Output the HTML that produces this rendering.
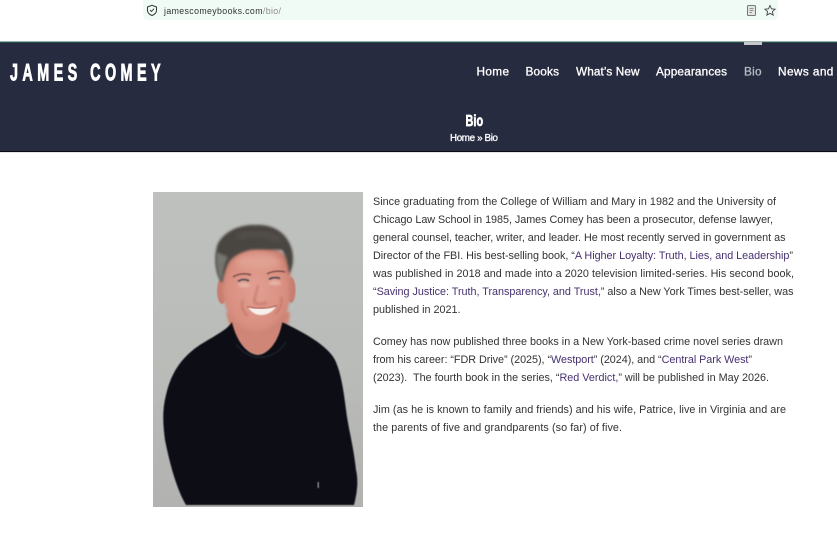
<!DOCTYPE html>
<html><head><meta charset="utf-8"><title>Bio</title>
<style>
html,body{margin:0;padding:0;background:#fff;width:837px;height:541px;overflow:hidden}
svg{position:absolute;left:0;top:0;display:block}
text{font-family:"Liberation Sans",sans-serif}
.b text{font-size:10.800px;fill:#333}
.l{fill:#46306f}
.n{font-size:11.800px;fill:#fff;stroke:#fff;stroke-width:.3px}
</style></head><body>
<svg width="837" height="541" viewBox="0 0 837 541" xmlns="http://www.w3.org/2000/svg">
<defs>
<filter id="t" x="-5%" y="-30%" width="110%" height="160%"><feGaussianBlur stdDeviation="0.25"/></filter>
<filter id="b1" x="-20%" y="-20%" width="140%" height="140%"><feGaussianBlur stdDeviation="1.200"/></filter>
<filter id="b2" x="-40%" y="-40%" width="180%" height="180%"><feGaussianBlur stdDeviation="3"/></filter>
<filter id="b0" x="-20%" y="-20%" width="140%" height="140%"><feGaussianBlur stdDeviation="0.6"/></filter>
<radialGradient id="face" cx="50%" cy="50%" r="60%"><stop offset="0" stop-color="#e2a093"/><stop offset=".7" stop-color="#d98f80"/><stop offset="1" stop-color="#bd7668"/></radialGradient>
<linearGradient id="bg" x1="0" y1="0" x2="0" y2="1"><stop offset="0" stop-color="#bec1be"/><stop offset=".6" stop-color="#b9bbb8"/><stop offset="1" stop-color="#b2b2b0"/></linearGradient>
<clipPath id="ph"><rect x="153" y="192" width="210" height="315"/></clipPath>
</defs>
<!-- URL bar -->
<path d="M143 0H778V15a5 5 0 0 1-5 5H148a5 5 0 0 1-5-5Z" fill="#f1fbf6"/>
<path d="M147.500 7l4.500-1.700L156.500 7v3.500c0 2.500-2 4-4.500 5-2.500-1-4.500-2.500-4.500-5Z" fill="none" stroke="#333" stroke-width="1"/>
<path d="M150 10l1.500 1.500 2.500-2.800" fill="none" stroke="#333" stroke-width=".9"/>
<text x="164" y="14" font-size="8.800" fill="#333" textLength="117" filter="url(#t)">jamescomeybooks.com<tspan fill="#8a8a8a">/bio/</tspan></text>
<rect x="747.500" y="5.500" width="8" height="10" rx="1" fill="#e2e6e4" stroke="#777" stroke-width="1"/>
<path d="M749.500 8.500h4M749.500 10.500h4M749.500 12.500h2.500" stroke="#777" stroke-width=".8"/>
<path d="M770 5.500l1.500 3.300 3.600.4-2.700 2.400.8 3.500-3.200-1.800-3.200 1.800.8-3.500-2.700-2.400 3.600-.4Z" fill="none" stroke="#444" stroke-width=".9"/>
<!-- header -->
<rect x="0" y="41.500" width="837" height="1" fill="#2f6a55"/>
<rect x="0" y="42.500" width="837" height="108.500" fill="#262b3f"/>
<rect x="0" y="151" width="837" height="1" fill="#0c0c10"/>
<rect x="0" y="152" width="837" height="1" fill="#e4e4e4"/>
<rect x="744" y="42" width="18" height="3" fill="#c6c6cc"/>
<text transform="translate(10 80.500) scale(.6 1)" font-size="24" font-weight="700" fill="#fff" stroke="#fff" stroke-width=".9" textLength="251">JAMES COMEY</text>
<g filter="url(#t)">
<text class="n" x="476.500" y="75.500" textLength="32.500">Home</text>
<text class="n" x="525.500" y="75.500" textLength="33.500">Books</text>
<text class="n" x="576" y="75.500" textLength="63.500">What’s New</text>
<text class="n" x="656" y="75.500" textLength="71">Appearances</text>
<text class="n" x="744" y="75.500" textLength="17.500" style="fill:#b9bac4;stroke:#b9bac4">Bio</text>
<text class="n" x="778" y="75.500" textLength="68">News and U</text>
</g>
<text transform="translate(465.500 126) scale(.68 1)" font-size="16" font-weight="700" fill="#fff" stroke="#fff" stroke-width=".7" textLength="26">Bio</text>
<text x="450" y="141" font-size="9.800" fill="#fff" stroke="#fff" stroke-width=".3" textLength="48" filter="url(#t)">Home » Bio</text>
<!-- photo -->
<g clip-path="url(#ph)">
<rect x="153" y="192" width="210" height="315" fill="url(#bg)"/>
<!-- neck -->
<path d="M226 312C230 330 236 350 258 356 280 350 288 335 290 312Z" fill="#cf8677" filter="url(#b1)"/>
<!-- sweater -->
<path d="M232 322C226 332 205 340 193 350 178 362 170 377 166 395 162 410 163 425 165 440 170 465 177 490 186 505H354C358 490 358 478 356 470 354 450 350 435 347 417 344 395 342 375 335 360 328 346 305 333 282 322 280 338 270 354 258 355 246 354 236 340 232 322Z" fill="#0e1016" filter="url(#b0)"/>
<path d="M236 344C248 362 274 362 286 342" fill="none" stroke="#1e2028" stroke-width="1.500" filter="url(#b0)"/>
<rect x="317.500" y="482" width="1.500" height="6" fill="#8a8a88" filter="url(#b0)"/>
<!-- ears -->
<ellipse cx="222" cy="291" rx="5" ry="13" fill="#c77e70" filter="url(#b0)"/>
<ellipse cx="291" cy="290" rx="4.500" ry="13" fill="#c77e70" filter="url(#b0)"/>
<!-- face -->
<path d="M222 265C220 295 226 320 243 331 254 336 267 335 276 329 290 318 292 292 290 262 280 240 235 240 222 265Z" fill="url(#face)" filter="url(#b1)"/>
<ellipse cx="258" cy="262" rx="22" ry="7" fill="#e0a192" filter="url(#b2)"/>
<!-- hair -->
<path d="M222 283C215 274 214 258 217 246 222 232 240 224 256 225 274 224 288 234 292 250 294 259 293 268 289 274 288 264 286 256 282 250 270 250 258 249 250 250 238 253 230 258 227 266 225 271 223 277 222 283Z" fill="#48443f" filter="url(#b1)"/>
<path d="M217 252C215 264 218 276 222 282 223 272 224 264 228 257Z" fill="#75746f" filter="url(#b1)"/>
<path d="M238 237C250 232 268 232 280 241" fill="none" stroke="#5d5852" stroke-width="3" filter="url(#b2)"/>
<!-- brows & eyes -->
<ellipse cx="244" cy="285" rx="6" ry="2.500" fill="#e8bbae" opacity=".8" filter="url(#b1)"/>
<ellipse cx="275" cy="283" rx="6" ry="2.500" fill="#e8bbae" opacity=".8" filter="url(#b1)"/>
<path d="M233 277C238 273.500 246 273 251 275M267 274C272 271 280 270.500 285 272" fill="none" stroke="#7a4f46" stroke-width="1.500" filter="url(#b0)"/>
<path d="M238 281.500C241 279 246 279 249 281M269 279.500C272 277 277 277 280 278.500" fill="none" stroke="#4e4e54" stroke-width="1.700" filter="url(#b0)"/>
<!-- nose -->
<path d="M258 285C256 295 253 301 255 303 259 305 265 304 267 302" fill="none" stroke="#b9685a" stroke-width="1.300" filter="url(#b1)"/>
<path d="M243 300C240 306 244 313 248 316M281 297C283 304 279 311 275 314" fill="none" stroke="#b56a5c" stroke-width="1.300" filter="url(#b1)"/>
<!-- mouth -->
<path d="M248 307C256 309 268 309 276 306 273 312 267 315 261 315 255 315 251 312 248 307Z" fill="#f7f0ea" filter="url(#b0)"/>
<path d="M247 306.500C255 309 268 309 277 305.500" fill="none" stroke="#98443c" stroke-width=".9" filter="url(#b0)"/>
</g>
<!-- body text -->
<g class="b" filter="url(#t)">
<text x="373" y="205" textLength="403">Since graduating from the College of William and Mary in 1982 and the University of</text>
<text x="373" y="223" textLength="400">Chicago Law School in 1985, James Comey has been a prosecutor, defense lawyer,</text>
<text x="373" y="241" textLength="412.500">general counsel, teacher, writer, and leader. He most recently served in government as</text>
<text x="373" y="259" textLength="420">Director of the FBI. His best-selling book, “<tspan class="l">A Higher Loyalty: Truth, Lies, and Leadership</tspan>”</text>
<text x="373" y="277" textLength="421">was published in 2018 and made into a 2020 television limited-series. His second book,</text>
<text x="373" y="295" textLength="420.500">“<tspan class="l">Saving Justice: Truth, Transparency, and Trust,</tspan>” also a New York Times best-seller, was</text>
<text x="373" y="313" textLength="87.500">published in 2021.</text>
<text x="373" y="345" textLength="410">Comey has now published three books in a New York-based crime novel series drawn</text>
<text x="373" y="363" textLength="379">from his career: “FDR Drive” (2025), “<tspan class="l">Westport</tspan>” (2024), and “<tspan class="l">Central Park West</tspan>”</text>
<text x="373" y="381" textLength="396" xml:space="preserve">(2023).  The fourth book in the series, “<tspan class="l">Red Verdict,</tspan>” will be published in May 2026.</text>
<text x="373" y="413" textLength="413">Jim (as he is known to family and friends) and his wife, Patrice, live in Virginia and are</text>
<text x="373" y="431" textLength="249">the parents of five and grandparents (so far) of five.</text>
</g>
</svg>
</body></html>
